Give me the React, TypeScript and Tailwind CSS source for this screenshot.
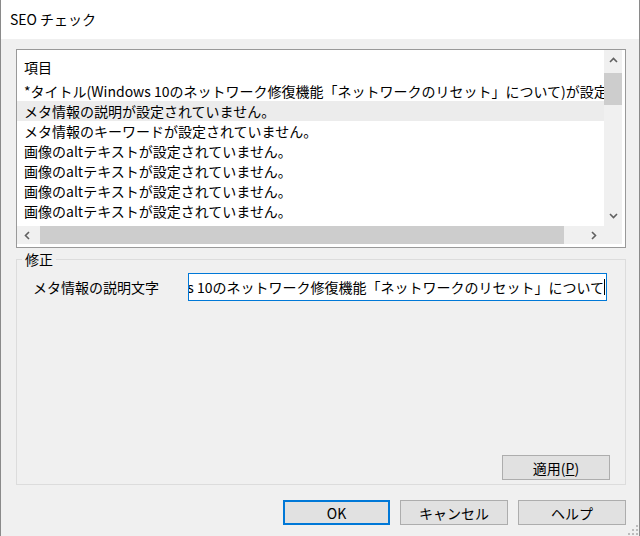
import React from "react";

// SEO check dialog (Windows style). Fixed 640x536 window.

const font = { fontFamily: '"Noto Sans CJK JP", "Noto Sans", sans-serif' };

const items = [
  "*タイトル(Windows 10のネットワーク修復機能「ネットワークのリセット」について)が設定されていません。",
  "メタ情報の説明が設定されていません。",
  "メタ情報のキーワードが設定されていません。",
  "画像のaltテキストが設定されていません。",
  "画像のaltテキストが設定されていません。",
  "画像のaltテキストが設定されていません。",
  "画像のaltテキストが設定されていません。",
];

function Chevron({ dir }: { dir: "up" | "down" | "left" | "right" }) {
  const pts = {
    up: "1,6 4.5,2.5 8,6",
    down: "1,3 4.5,6.5 8,3",
    left: "6,1 2.5,4.5 6,8",
    right: "3,1 6.5,4.5 3,8",
  }[dir];
  return (
    <svg width="9" height="9" viewBox="0 0 9 9">
      <polyline points={pts} fill="none" stroke="#606060" strokeWidth="1.6" />
    </svg>
  );
}

function Button({ children, primary }: { children: React.ReactNode; primary?: boolean }) {
  return (
    <button
      className={
        primary
          ? "w-[107px] h-[25px] bg-[#e1e1e1] border-2 border-[#0078d7] text-[14px] leading-none text-black"
          : "w-[108px] h-[25px] bg-[#e1e1e1] border border-[#adadad] text-[14px] leading-none text-black"
      }
    >
      {children}
    </button>
  );
}

function ItemList() {
  return (
    <div className="w-[610px] h-[199px] border border-[#999999] bg-white pr-[3px] pb-[3px] flex flex-col">
      <div className="flex flex-1 min-h-0">
        <div className="flex-1 min-w-0 overflow-hidden pt-[7px]">
          <div className="h-[20px] leading-[20px] pl-[7px] mb-[4px] text-[14px]">項目</div>
          {items.map((t, i) => (
            <div
              key={i}
              className={
                "h-[20px] leading-[20px] pl-[7px] text-[14px] whitespace-nowrap overflow-hidden " +
                (i === 1 ? "bg-[#ececec]" : "")
              }
            >
              {t}
            </div>
          ))}
        </div>
        {/* vertical scrollbar */}
        <div className="w-[18px] bg-[#f0f0f0] flex flex-col">
          <div className="h-[21px] flex items-center justify-center">
            <Chevron dir="up" />
          </div>
          <div className="flex-1 pt-[2px]">
            <div className="h-[32px] bg-[#cdcdcd]" />
          </div>
          <div className="h-[21px] flex items-center justify-center">
            <Chevron dir="down" />
          </div>
        </div>
      </div>
      {/* horizontal scrollbar */}
      <div className="h-[18px] flex bg-[#f0f0f0]">
        <div className="w-[21px] flex items-center justify-center">
          <Chevron dir="left" />
        </div>
        <div className="flex-1 pl-[2px] pr-[19px]">
          <div className="h-full bg-[#cdcdcd]" />
        </div>
        <div className="w-[21px] flex items-center justify-center">
          <Chevron dir="right" />
        </div>
        <div className="w-[18px]" />
      </div>
    </div>
  );
}

export default function App() {
  return (
    <div style={font} className="relative w-[640px] h-[536px] bg-[#f0f0f0] border-x border-[#8a8a8a] text-black flex flex-col overflow-hidden">
      <div className="h-[39px] bg-white flex items-center pl-[9px] text-[14px]">SEO チェック</div>

      <div className="flex flex-col pl-[15px] pt-[10px]">
        <ItemList />

        <div className="relative mt-[11px] w-[610px] h-[226px] border border-[#dcdcdc] flex flex-col">
          <span className="absolute -top-[10px] left-[5px] px-[3px] bg-[#f0f0f0] text-[14px] leading-[18px]">修正</span>

          <div className="flex items-center mt-[13px] pl-[16px]">
            <span className="w-[155px] text-[14px]">メタ情報の説明文字</span>
            <div className="w-[419px] h-[28px] border border-[#0078d7] bg-white flex items-center justify-end overflow-hidden pr-[1px]">
              <span className="whitespace-nowrap text-[14px] leading-none">
                Windows 10のネットワーク修復機能「ネットワークのリセット」について
              </span>
              <span className="w-px h-[16px] bg-black shrink-0" />
            </div>
          </div>

          <div className="mt-auto mb-[4px] mr-[15px] self-end">
            <Button>
              適用(<span className="underline">P</span>)
            </Button>
          </div>
        </div>

        <div className="flex gap-[10px] justify-end w-[610px] mt-[15px]">
          <Button primary>OK</Button>
          <Button>キャンセル</Button>
          <Button>ヘルプ</Button>
        </div>
      </div>

      {/* size grip */}
      <svg className="absolute right-[1px] bottom-[1px]" width="11" height="11" viewBox="0 0 11 11">
        {[
          [9, 1],
          [9, 5],
          [5, 5],
          [9, 9],
          [5, 9],
          [1, 9],
        ].map(([x, y], i) => (
          <rect key={i} x={x} y={y} width="2" height="2" fill="#bcbcbc" />
        ))}
      </svg>
    </div>
  );
}
